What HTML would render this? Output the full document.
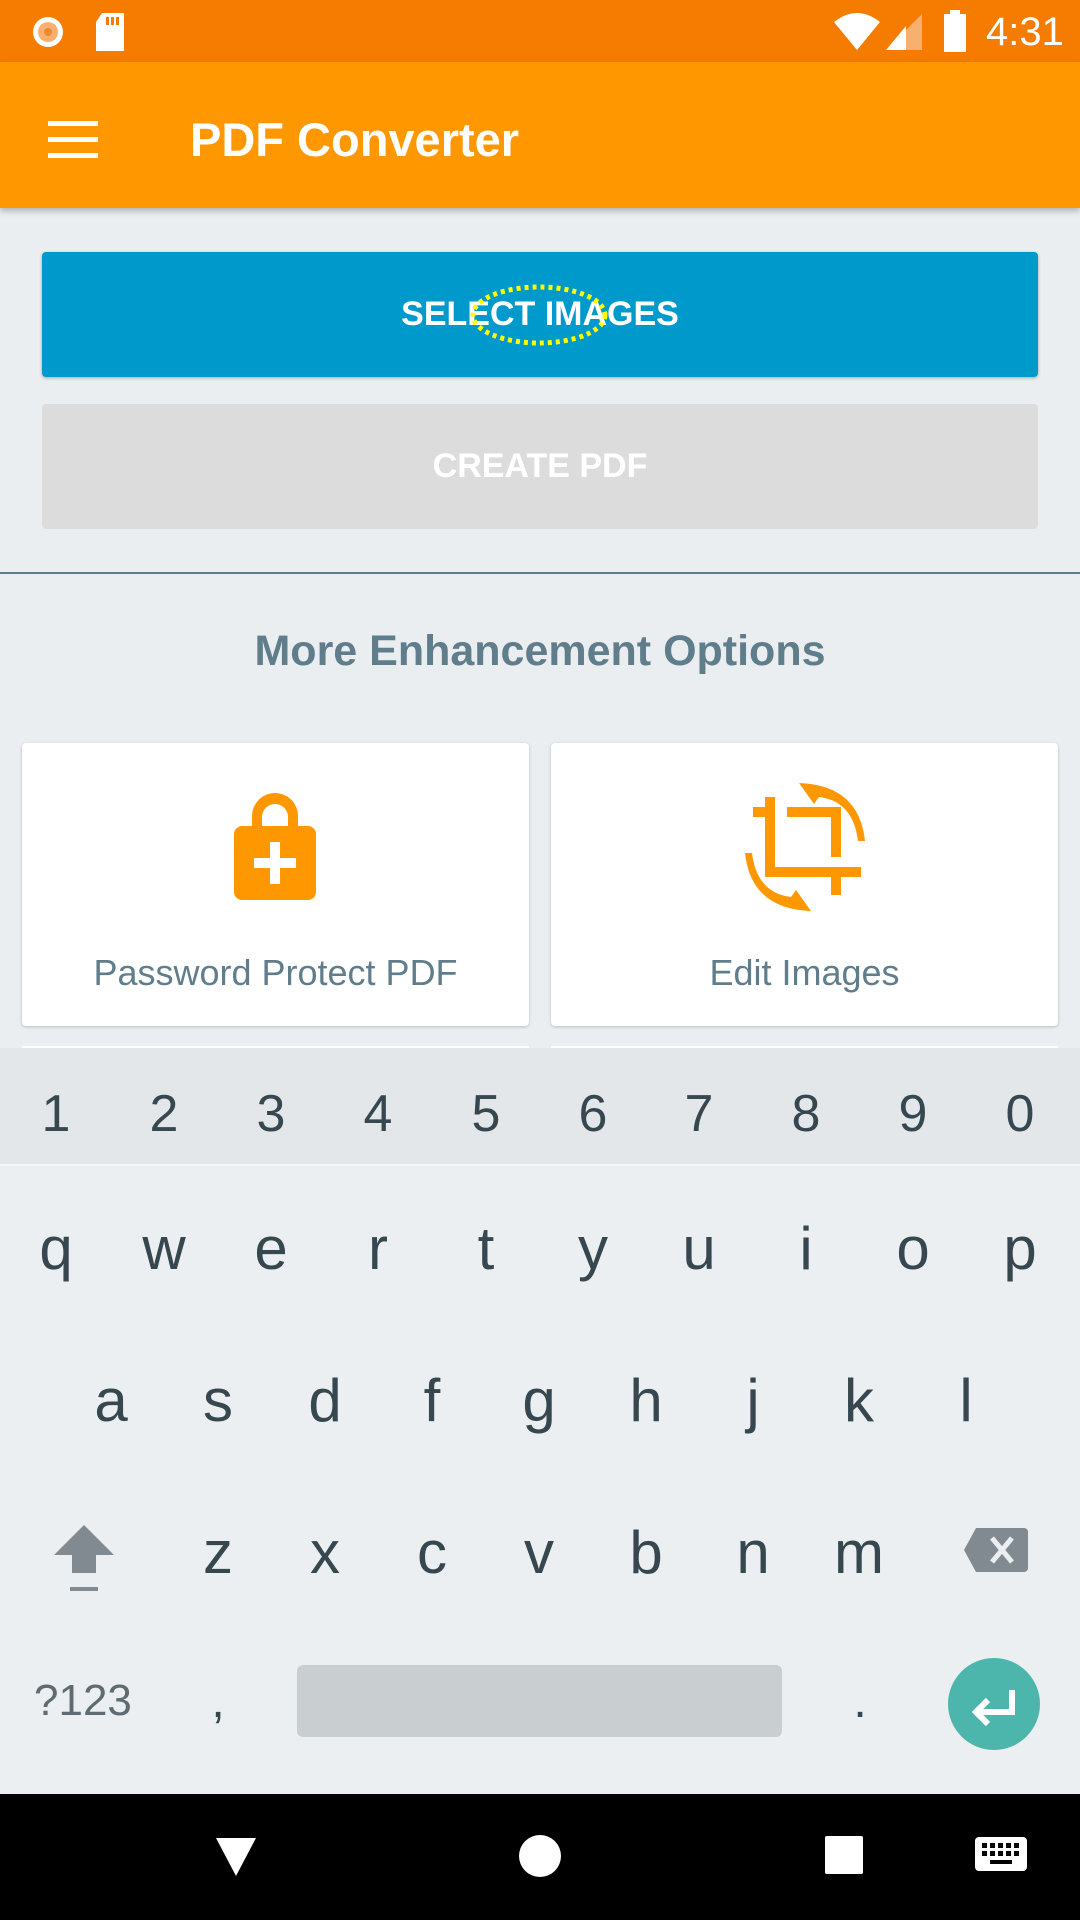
<!DOCTYPE html>
<html><head><meta charset="utf-8"><style>
*{margin:0;padding:0;box-sizing:border-box}
body{width:1080px;height:1920px;overflow:hidden;background:#eaeef1;font-family:"Liberation Sans",sans-serif;position:relative}
.abs{position:absolute}
.status{left:0;top:0;width:1080px;height:62px;background:#f57c00}
.appbar{left:0;top:62px;width:1080px;height:146px;background:#ff9800;box-shadow:0 3px 6px rgba(0,0,0,.25)}
.btn{left:42px;width:996px;height:125px;border-radius:4px;color:#fff;font-size:34px;font-weight:bold;display:flex;align-items:center;justify-content:center}
.card{top:743px;width:507px;height:283px;background:#fff;border-radius:4px;box-shadow:0 1px 3px rgba(0,0,0,.2)}
.card .lbl{position:absolute;left:0;right:0;top:209px;text-align:center;font-size:36px;color:#607d8b}
.kb{left:0;top:1048px;width:1080px;height:746px;background:#eceff1}
.k{position:absolute;width:80px;margin-left:-40px;text-align:center;color:#37474f;font-size:60px}
.n{font-size:52px;color:#37474f}
.nav{left:0;top:1794px;width:1080px;height:126px;background:#000}
</style></head><body>
<div class="abs status">
 <svg class="abs" style="left:28px;top:14px" width="40" height="36"><circle cx="20" cy="18" r="15" fill="#fff"/><circle cx="20" cy="18" r="10" fill="#f8b070"/><circle cx="20" cy="18" r="4" fill="#f08a30"/></svg>
 <svg class="abs" style="left:94px;top:12px" width="32" height="40"><path d="M8 1h22v38H2V10z" fill="#fff"/><rect x="12" y="5" width="3" height="8" fill="#f57c00"/><rect x="17" y="5" width="3" height="8" fill="#f57c00"/><rect x="22" y="5" width="3" height="8" fill="#f57c00"/></svg>
 <svg class="abs" style="left:832px;top:12px" width="50" height="40"><path d="M2 10Q25-8 48 10L25 38z" fill="#fff"/></svg>
 <svg class="abs" style="left:884px;top:12px" width="40" height="40"><path d="M38 2V38H2z" fill="#f8b070"/><path d="M22 20V38H2L22 14z" fill="#fff"/></svg>
 <svg class="abs" style="left:942px;top:10px" width="26" height="42"><rect x="8" y="0" width="10" height="6" fill="#fff"/><rect x="2" y="4" width="22" height="38" fill="#fff"/></svg>
 <div class="abs" style="left:986px;top:10px;color:#fff;font-size:40px">4:31</div>
</div>
<div class="abs appbar">
 <div class="abs" style="left:48px;top:59px;width:50px;height:5px;background:#fff"></div>
 <div class="abs" style="left:48px;top:75px;width:50px;height:5px;background:#fff"></div>
 <div class="abs" style="left:48px;top:91px;width:50px;height:5px;background:#fff"></div>
 <div class="abs" style="left:190px;top:50px;color:#fff;font-size:47px;font-weight:bold">PDF Converter</div>
</div>
<div class="abs btn" style="top:252px;background:#0099cc;box-shadow:0 1px 3px rgba(0,0,0,.3)">SELECT IMAGES</div>
<svg class="abs" style="left:468px;top:283px" width="142" height="64"><ellipse cx="71" cy="32" rx="66" ry="28" fill="none" stroke="#ffff00" stroke-width="5" stroke-dasharray="4 4"/></svg>
<div class="abs btn" style="top:404px;background:#dcdcdc">CREATE PDF</div>
<div class="abs" style="left:0;top:572px;width:1080px;height:2px;background:#607d8b"></div>
<div class="abs" style="left:0;top:627px;width:1080px;text-align:center;font-size:43px;font-weight:bold;color:#607d8b">More Enhancement Options</div>
<div class="abs card" style="left:22px">
 <svg class="abs" style="left:210px;top:47px" width="86" height="112" viewBox="0 0 86 112"><path d="M20 38V26a23 23 0 0 1 46 0v12h-10V27a13 13 0 0 0-26 0v11z" fill="#ff9800"/><rect x="2" y="36" width="82" height="74" rx="8" fill="#ff9800"/><rect x="38" y="52" width="10" height="42" fill="#fff"/><rect x="22" y="68" width="42" height="10" fill="#fff"/></svg>
 <div class="lbl">Password Protect PDF</div>
</div>
<div class="abs card" style="left:551px">
 <svg class="abs" style="left:188px;top:40px" width="132" height="128" viewBox="0 0 132 128"><g fill="#ff9800"><path d="M60 0Q120 2 126 58h-7Q114 18 80 14l-5 7-15-21z"/><path d="M72 128Q12 126 6 70h7Q18 110 52 114l5-7 15 21z"/><rect x="26" y="14" width="10" height="78"/><rect x="14" y="24" width="22" height="10"/><rect x="26" y="84" width="96" height="10"/><rect x="92" y="84" width="10" height="28"/><rect x="48" y="24" width="50" height="10"/><rect x="92" y="24" width="10" height="50"/></g></svg>
 <div class="lbl">Edit Images</div>
</div>
<div class="abs" style="left:22px;top:1046px;width:507px;height:6px;background:#fff"></div>
<div class="abs" style="left:551px;top:1046px;width:507px;height:6px;background:#fff"></div>
<div class="abs kb">
 <div class="abs" style="left:0;top:0;width:1080px;height:118px;background:#e3e7ea;border-bottom:2px solid #f5f7f8"></div>
 <div class="k n" style="left:56px;top:36px">1</div><div class="k n" style="left:164px;top:36px">2</div><div class="k n" style="left:271px;top:36px">3</div><div class="k n" style="left:378px;top:36px">4</div><div class="k n" style="left:486px;top:36px">5</div><div class="k n" style="left:593px;top:36px">6</div><div class="k n" style="left:699px;top:36px">7</div><div class="k n" style="left:806px;top:36px">8</div><div class="k n" style="left:913px;top:36px">9</div><div class="k n" style="left:1020px;top:36px">0</div>
 <div class="k" style="left:56px;top:166px">q</div><div class="k" style="left:164px;top:166px">w</div><div class="k" style="left:271px;top:166px">e</div><div class="k" style="left:378px;top:166px">r</div><div class="k" style="left:486px;top:166px">t</div><div class="k" style="left:593px;top:166px">y</div><div class="k" style="left:699px;top:166px">u</div><div class="k" style="left:806px;top:166px">i</div><div class="k" style="left:913px;top:166px">o</div><div class="k" style="left:1020px;top:166px">p</div>
 <div class="k" style="left:111px;top:318px">a</div><div class="k" style="left:218px;top:318px">s</div><div class="k" style="left:325px;top:318px">d</div><div class="k" style="left:432px;top:318px">f</div><div class="k" style="left:539px;top:318px">g</div><div class="k" style="left:646px;top:318px">h</div><div class="k" style="left:753px;top:318px">j</div><div class="k" style="left:859px;top:318px">k</div><div class="k" style="left:966px;top:318px">l</div>
 <svg class="abs" style="left:52px;top:475px" width="64" height="72"><path d="M32 2L62 32H44V50H20V32H2z" fill="#808a90"/><rect x="18" y="64" width="28" height="4" fill="#808a90"/></svg>
 <div class="k" style="left:218px;top:470px">z</div><div class="k" style="left:325px;top:470px">x</div><div class="k" style="left:432px;top:470px">c</div><div class="k" style="left:539px;top:470px">v</div><div class="k" style="left:646px;top:470px">b</div><div class="k" style="left:753px;top:470px">n</div><div class="k" style="left:859px;top:470px">m</div>
 <svg class="abs" style="left:962px;top:478px" width="66" height="48"><path d="M14 2H62a4 4 0 0 1 4 4V42a4 4 0 0 1-4 4H14L2 24z" fill="#808a90"/><path d="M30 12L50 36M50 12L30 36" stroke="#eceff1" stroke-width="5"/></svg>
 <div class="abs" style="left:34px;top:628px;font-size:44px;color:#5f6b72">?123</div>
 <div class="k" style="left:218px;top:626px;font-size:48px">,</div>
 <div class="abs" style="left:297px;top:617px;width:485px;height:72px;background:#c9ced1;border-radius:6px"></div>
 <div class="k" style="left:860px;top:626px;font-size:48px">.</div>
 <svg class="abs" style="left:948px;top:610px" width="92" height="92"><circle cx="46" cy="46" r="46" fill="#4db6ac"/><path d="M64 32V54H30M40 42L28 54L40 66" fill="none" stroke="#fff" stroke-width="6"/></svg>
</div>
<div class="abs nav">
 <svg class="abs" style="left:214px;top:40px" width="44" height="44"><path d="M2 4H42L22 42z" fill="#fff"/></svg>
 <svg class="abs" style="left:518px;top:40px" width="44" height="44"><circle cx="22" cy="22" r="21" fill="#fff"/></svg>
 <svg class="abs" style="left:824px;top:41px" width="40" height="40"><rect x="1" y="1" width="38" height="38" rx="2" fill="#fff"/></svg>
 <svg class="abs" style="left:974px;top:42px" width="54" height="36"><rect x="1" y="1" width="52" height="34" rx="4" fill="#fff"/><g fill="#000"><rect x="8" y="7" width="5" height="5"/><rect x="16" y="7" width="5" height="5"/><rect x="24" y="7" width="5" height="5"/><rect x="32" y="7" width="5" height="5"/><rect x="40" y="7" width="5" height="5"/><rect x="8" y="15" width="5" height="5"/><rect x="16" y="15" width="5" height="5"/><rect x="24" y="15" width="5" height="5"/><rect x="32" y="15" width="5" height="5"/><rect x="40" y="15" width="5" height="5"/><rect x="16" y="24" width="22" height="4"/></g></svg>
</div>
</body></html>
